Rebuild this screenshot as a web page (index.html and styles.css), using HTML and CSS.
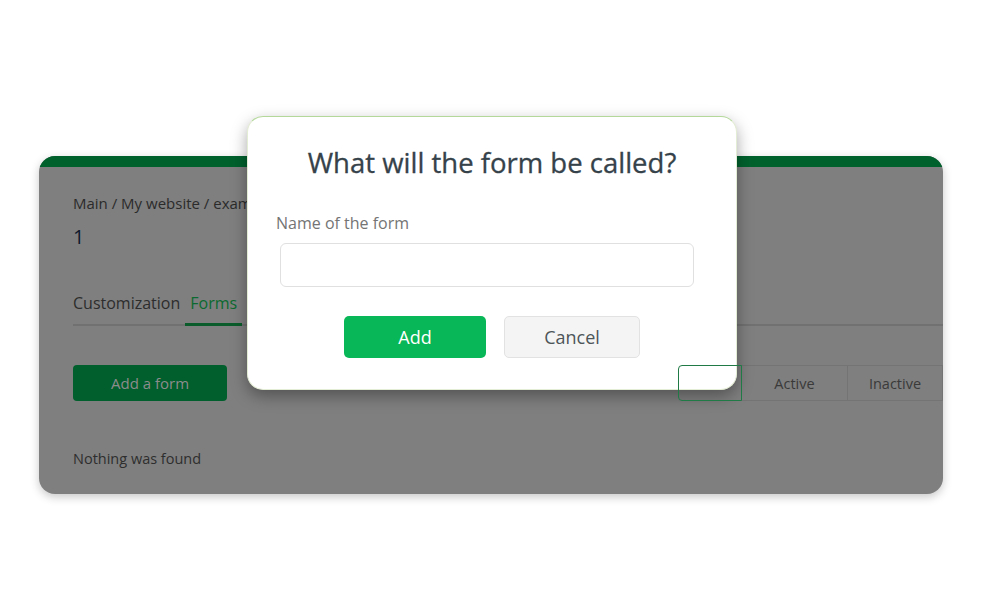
FILE: index.html
```html
<!DOCTYPE html>
<html lang="en">
<head>
<meta charset="utf-8">
<title>Forms</title>
<link rel="stylesheet" href="styles.css">
</head>
<body>
<div class="stage">
  <section class="card">
    <div class="card-top"></div>
    <div class="card-body">
      <div class="crumbs">Main / My website / example</div>
      <div class="page-title">1</div>
      <nav class="tabs">
        <span class="tab">Customization</span>
        <span class="tab active">Forms</span>
        <span class="tab">Statistics</span>
      </nav>
      <div class="toolbar">
        <button class="btn-add-form">Add a form</button>
        <div class="filters">
          <span class="filter sel">All</span>
          <span class="filter">Active</span>
          <span class="filter">Inactive</span>
        </div>
      </div>
      <p class="empty">Nothing was found</p>
    </div>
  </section>

  <div class="modal">
    <h2 class="modal-title">What will the form be called?</h2>
    <label class="field-label">Name of the form</label>
    <input class="field-input" type="text">
    <div class="modal-actions">
      <button class="btn btn-primary">Add</button>
      <button class="btn btn-secondary">Cancel</button>
    </div>
  </div>
</div>
</body>
</html>
```

FILE: styles.css
```css
* { box-sizing: border-box; }

html, body {
  margin: 0;
  padding: 0;
  background: #ffffff;
  font-family: "Open Sans", "Noto Sans", sans-serif;
}

.stage {
  position: relative;
  width: 981px;
  height: 610px;
  padding-top: 156px;
  padding-left: 39px;
}

.card {
  width: 904px;
  height: 338px;
  border-radius: 16px;
  overflow: hidden;
  background: #7f7f7f;
  box-shadow: 0 3px 10px rgba(0, 0, 0, 0.22);
}

.card-top {
  height: 11px;
  background: #00612d;
}

.card-body {
  padding: 26px 0 0 34px;
}

.crumbs {
  font-size: 15px;
  line-height: 20px;
  color: #2b2b2b;
}

.page-title {
  margin-top: 12px;
  font-size: 20px;
  line-height: 24px;
  color: #0f1a2c;
}

.tabs {
  display: flex;
  margin-top: 43px;
  border-bottom: 2px solid #717171;
}

.tab {
  padding: 0 5px 10px;
  font-size: 16px;
  line-height: 22px;
  color: #2d2d2d;
  margin-bottom: -2px;
}

.tab:first-child { padding-left: 0; }

.tab.active {
  color: #0b6a2f;
  border-bottom: 3px solid #0a5d2a;
  padding-bottom: 9px;
}

.toolbar {
  display: flex;
  align-items: center;
  margin-top: 39px;
}

.btn-add-form {
  width: 154px;
  height: 36px;
  border: 0;
  border-radius: 4px;
  background: #005f2c;
  color: #8c8c8c;
  font-family: inherit;
  font-size: 15px;
}

.filters {
  display: flex;
  margin-left: auto;
}

.filter {
  display: flex;
  align-items: center;
  justify-content: center;
  height: 36px;
  border: 1px solid #747474;
  margin-left: -1px;
  font-size: 14.5px;
  color: #3a3a3a;
}

.filter.sel {
  width: 64px;
  border-color: #1f7a45;
  border-radius: 4px 0 0 4px;
  z-index: 1;
  color: transparent;
}

.filter:nth-child(2) { width: 107px; }
.filter:nth-child(3) { width: 96px; }

.empty {
  margin: 48px 0 0;
  font-size: 14.5px;
  line-height: 20px;
  color: #2e2e2e;
}

.modal {
  position: absolute;
  left: 247px;
  top: 116px;
  width: 490px;
  height: 274px;
  padding: 28px 28px 0;
  background: #ffffff;
  border: 1px solid #e3ecd4;
  border-top-color: #b4d89a;
  border-radius: 16px;
  box-shadow: 0 6px 16px rgba(0, 0, 0, 0.35);
  display: flex;
  flex-direction: column;
}

.modal-title {
  margin: 0;
  font-size: 27.5px;
  line-height: 36px;
  font-weight: 400;
  -webkit-text-stroke: 0.3px #36424a;
  color: #36424a;
  text-align: center;
}

.field-label {
  margin-top: 32px;
  font-size: 16px;
  line-height: 20px;
  color: #747474;
}

.field-input {
  margin: 10px 0 0 4px;
  width: 414px;
  height: 44px;
  border: 1px solid #e0e0e0;
  border-radius: 6px;
  background: #fff;
}

.modal-actions {
  display: flex;
  justify-content: center;
  gap: 18px;
  margin-top: 29px;
}

.btn {
  height: 42px;
  border-radius: 5px;
  font-family: inherit;
  font-size: 18px;
}

.btn-primary {
  width: 142px;
  border: 0;
  background: #08b757;
  color: #ffffff;
}

.btn-secondary {
  width: 136px;
  border: 1px solid #e2e2e2;
  background: #f4f4f4;
  color: #4d5559;
}
```
